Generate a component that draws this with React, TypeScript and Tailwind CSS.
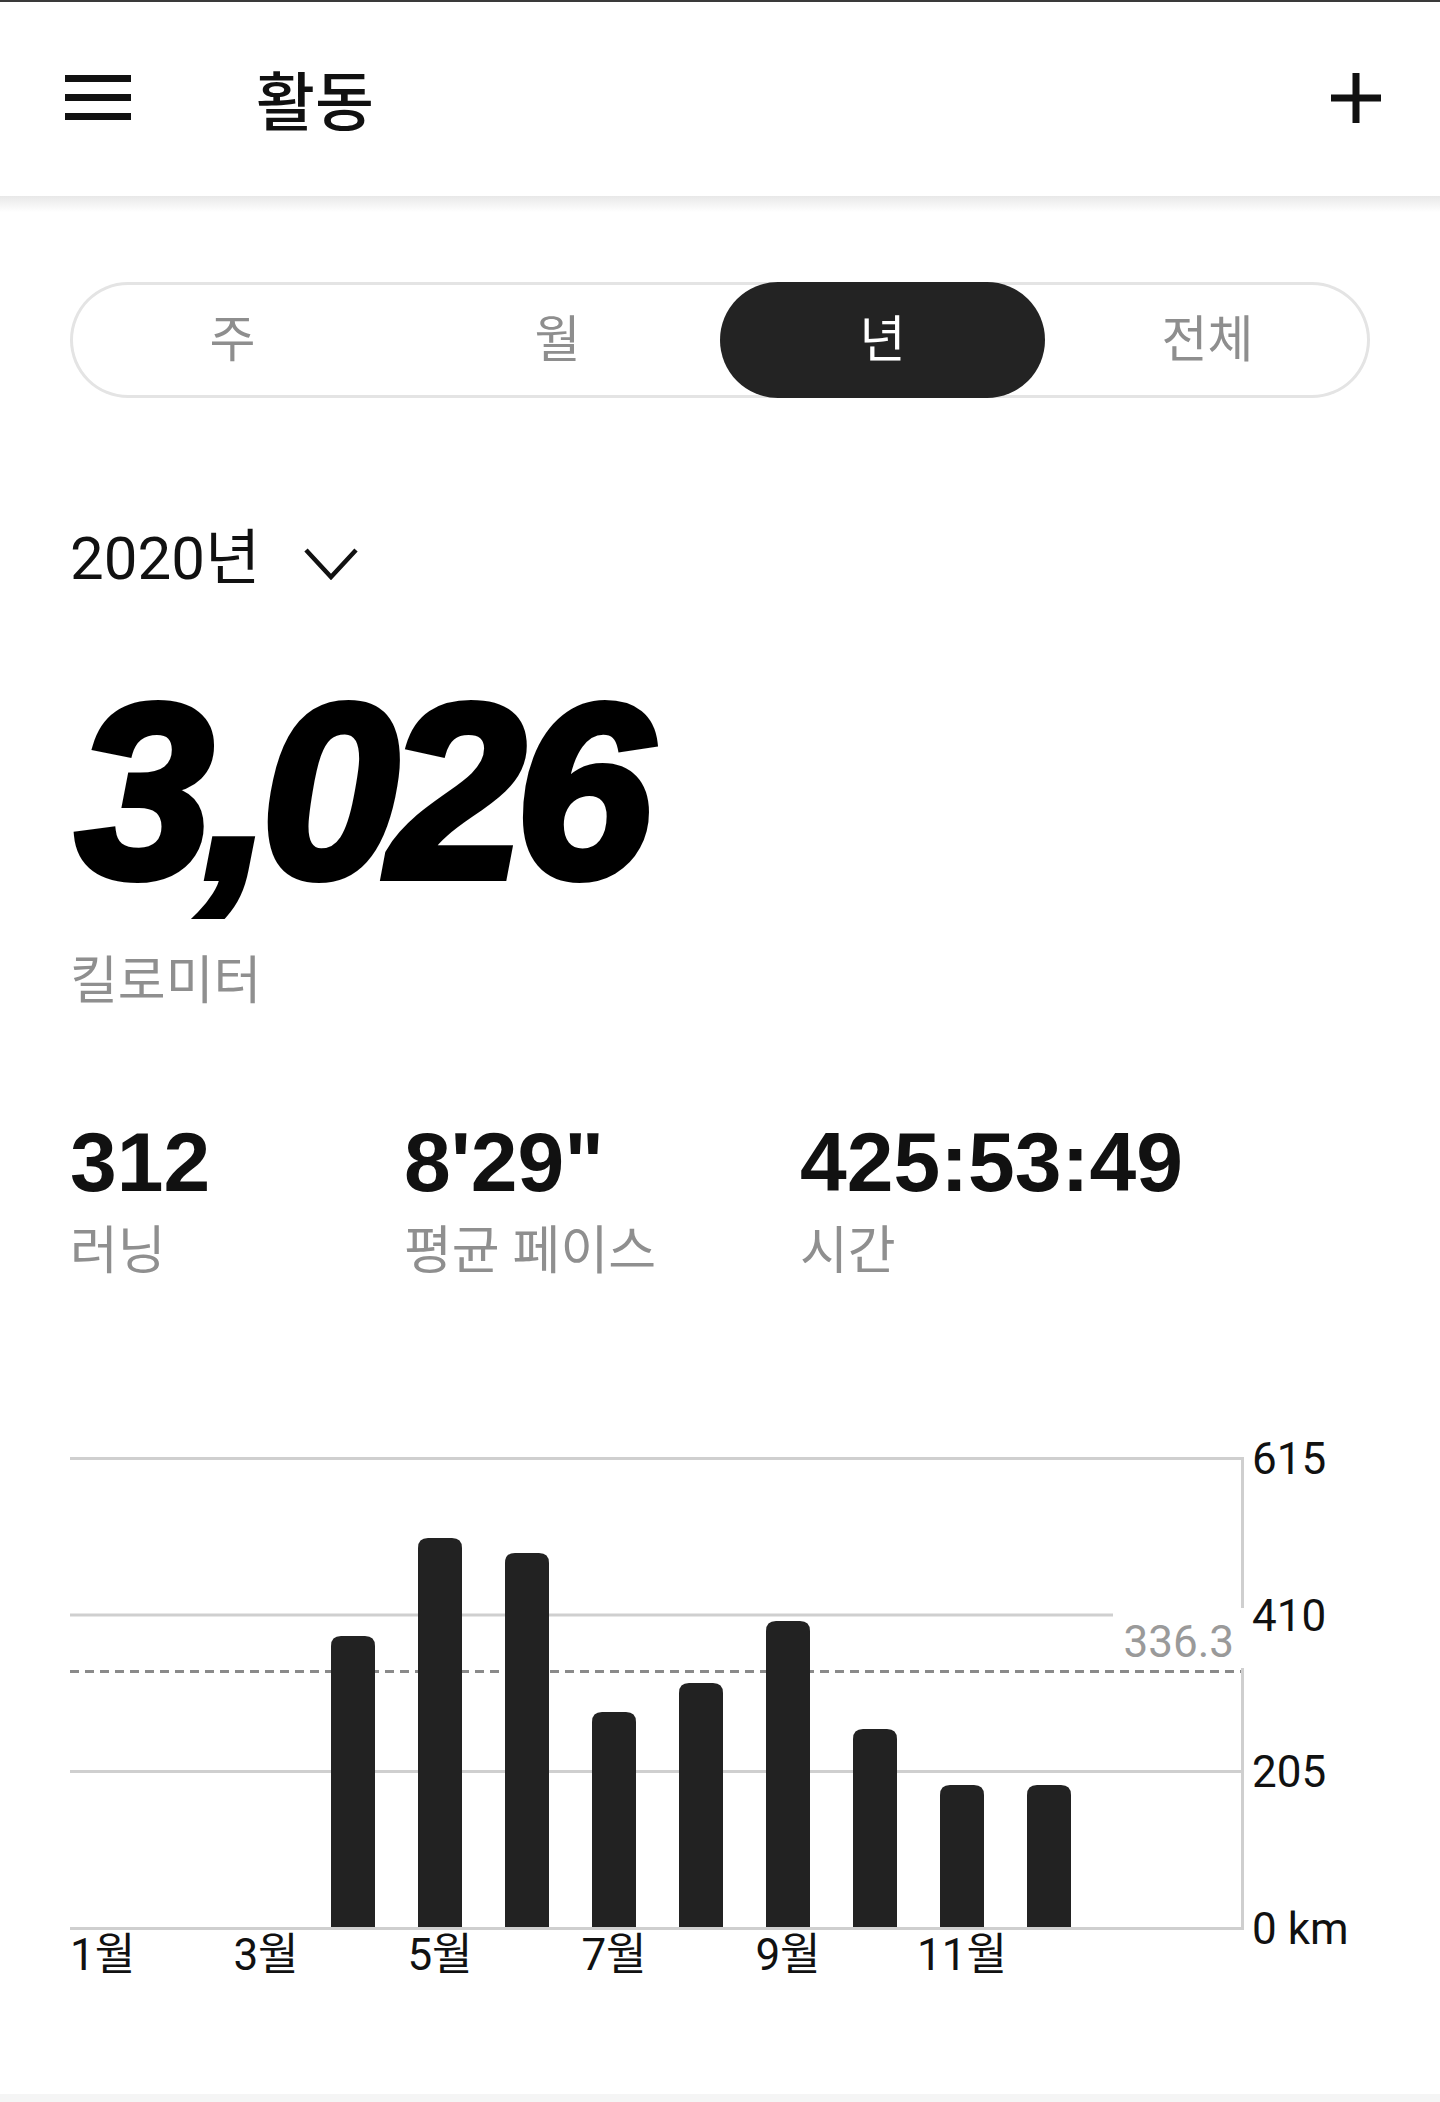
import React from "react";

const bars = [
  { m: 4, top: 179 },
  { m: 5, top: 81 },
  { m: 6, top: 96 },
  { m: 7, top: 255 },
  { m: 8, top: 226 },
  { m: 9, top: 164 },
  { m: 10, top: 272 },
  { m: 11, top: 328 },
  { m: 12, top: 328 },
];

function barPath(m: number, top: number) {
  const x = 87 * (m - 1);
  const w = 44;
  const r = 10;
  const b = 471;
  return `M${x} ${b} V${top + r} Q${x} ${top} ${x + r} ${top} H${x + w - r} Q${x + w} ${top} ${x + w} ${top + r} V${b} Z`;
}

const months = [
  { m: 1, label: "1월" },
  { m: 2, label: "" },
  { m: 3, label: "3월" },
  { m: 4, label: "" },
  { m: 5, label: "5월" },
  { m: 6, label: "" },
  { m: 7, label: "7월" },
  { m: 8, label: "" },
  { m: 9, label: "9월" },
  { m: 10, label: "" },
  { m: 11, label: "11월" },
  { m: 12, label: "" },
];

export default function App() {
  return (
    <div className="w-[1440px] min-h-[2102px] bg-white font-[family-name:Roboto,'Noto_Sans_CJK_KR',sans-serif] text-[#111]">
      <div className="h-[2px] bg-[#3a3a3a]" />
      {/* Header */}
      <div className="h-[194px] flex items-center pl-[65px] pr-[59px]">
        <div className="w-[66px] flex flex-col gap-[12px] mb-[4px]">
          <div className="h-[7px] bg-[#111]" />
          <div className="h-[7px] bg-[#111]" />
          <div className="h-[7px] bg-[#111]" />
        </div>
        <div className="ml-[125px] mt-[9px] text-[64px] leading-none font-medium">활동</div>
        <svg className="ml-auto mb-[2px]" width="50" height="50" viewBox="0 0 50 50">
          <path d="M25 0 V50 M0 25 H50" stroke="#111" strokeWidth="7" fill="none" />
        </svg>
      </div>
      <div className="h-[16px] bg-linear-to-b from-[#e8e8e8] to-white" />

      {/* Segmented control */}
      <div className="px-[70px] mt-[70px]">
        <div className="h-[116px] rounded-full grid grid-cols-4 shadow-[inset_0_0_0_3px_#e4e4e4]">
          <div className="flex items-center justify-center text-[50px] leading-none text-[#8e8e8e]">주</div>
          <div className="flex items-center justify-center text-[50px] leading-none text-[#8e8e8e]">월</div>
          <div className="flex items-center justify-center text-[50px] leading-none text-white bg-[#232323] rounded-full">년</div>
          <div className="flex items-center justify-center text-[50px] leading-none text-[#8e8e8e]">전체</div>
        </div>
      </div>

      {/* Year selector */}
      <div className="px-[70px] mt-[131px] flex items-start">
        <div className="text-[60px] leading-none">2020년</div>
        <svg className="ml-[44px] mt-[19px]" width="54" height="32" viewBox="0 0 54 32">
          <polyline points="2,2 27,29 52,2" stroke="#111" strokeWidth="4.5" fill="none" />
        </svg>
      </div>

      {/* Big total */}
      <div className="pl-[76px] mt-[80px]">
        <div className="font-[family-name:'Liberation_Sans',sans-serif] font-bold italic text-[246px] leading-none tracking-[-0.04em] [-webkit-text-stroke:8px_#000] text-black">
          3,026
        </div>
      </div>
      <div className="px-[70px] mt-[41px] text-[52px] leading-none text-[#8f8f8f]">킬로미터</div>

      {/* Stats */}
      <div className="px-[70px] mt-[112px] flex">
        <div className="w-[334px]">
          <div className="font-[family-name:'Liberation_Sans',sans-serif] font-bold text-[84px] leading-none">312</div>
          <div className="mt-[22px] text-[52px] leading-none text-[#8f8f8f]">러닝</div>
        </div>
        <div className="w-[396px]">
          <div className="font-[family-name:'Liberation_Sans',sans-serif] font-bold text-[84px] leading-none">8'29"</div>
          <div className="mt-[22px] text-[52px] leading-none text-[#8f8f8f]">평균 페이스</div>
        </div>
        <div>
          <div className="font-[family-name:'Liberation_Sans',sans-serif] font-bold text-[84px] leading-none">425:53:49</div>
          <div className="mt-[22px] text-[52px] leading-none text-[#8f8f8f]">시간</div>
        </div>
      </div>

      {/* Chart */}
      <div className="pl-[70px] mt-[159px] flex items-start">
        <div className="pt-[20px]">
          <div className="relative w-[1174px] h-[473px]">
            <svg width="1174" height="473" viewBox="0 0 1174 473">
              <rect x="0" y="0" width="1174" height="3" fill="#cfcfcf" />
              <rect x="0" y="156.5" width="1043" height="3" fill="#cfcfcf" />
              <rect x="0" y="313" width="1171" height="3" fill="#cfcfcf" />
              <rect x="1171" y="0" width="3" height="151" fill="#cfcfcf" />
              <rect x="1171" y="211" width="3" height="262" fill="#cfcfcf" />
              <line x1="0" y1="214.5" x2="1171" y2="214.5" stroke="#8a8a8a" strokeWidth="3" strokeDasharray="9 6" />
              {bars.map((b) => (
                <path key={b.m} d={barPath(b.m, b.top)} fill="#222" />
              ))}
              <rect x="0" y="470" width="1174" height="3" fill="#cfcfcf" />
            </svg>
            <div className="absolute right-[10px] top-[163px] text-[44px] leading-none text-[#9a9a9a]">336.3</div>
          </div>
          <div className="mt-[3px] grid grid-cols-[repeat(12,87px)]">
            {months.map((mo) => (
              <div key={mo.m} className={`w-[44px] flex ${mo.m === 1 ? "justify-start" : "justify-center"}`}>
                <span className="whitespace-nowrap text-[44px] leading-none">{mo.label}</span>
              </div>
            ))}
          </div>
        </div>
        <div className="ml-[8px] h-[514px] flex flex-col justify-between text-[44px] leading-none">
          <div>615</div>
          <div>410</div>
          <div>205</div>
          <div className="whitespace-nowrap">0 km</div>
        </div>
      </div>

      <div className="mt-[117px] h-[8px] bg-[#f5f5f5]" />
    </div>
  );
}
